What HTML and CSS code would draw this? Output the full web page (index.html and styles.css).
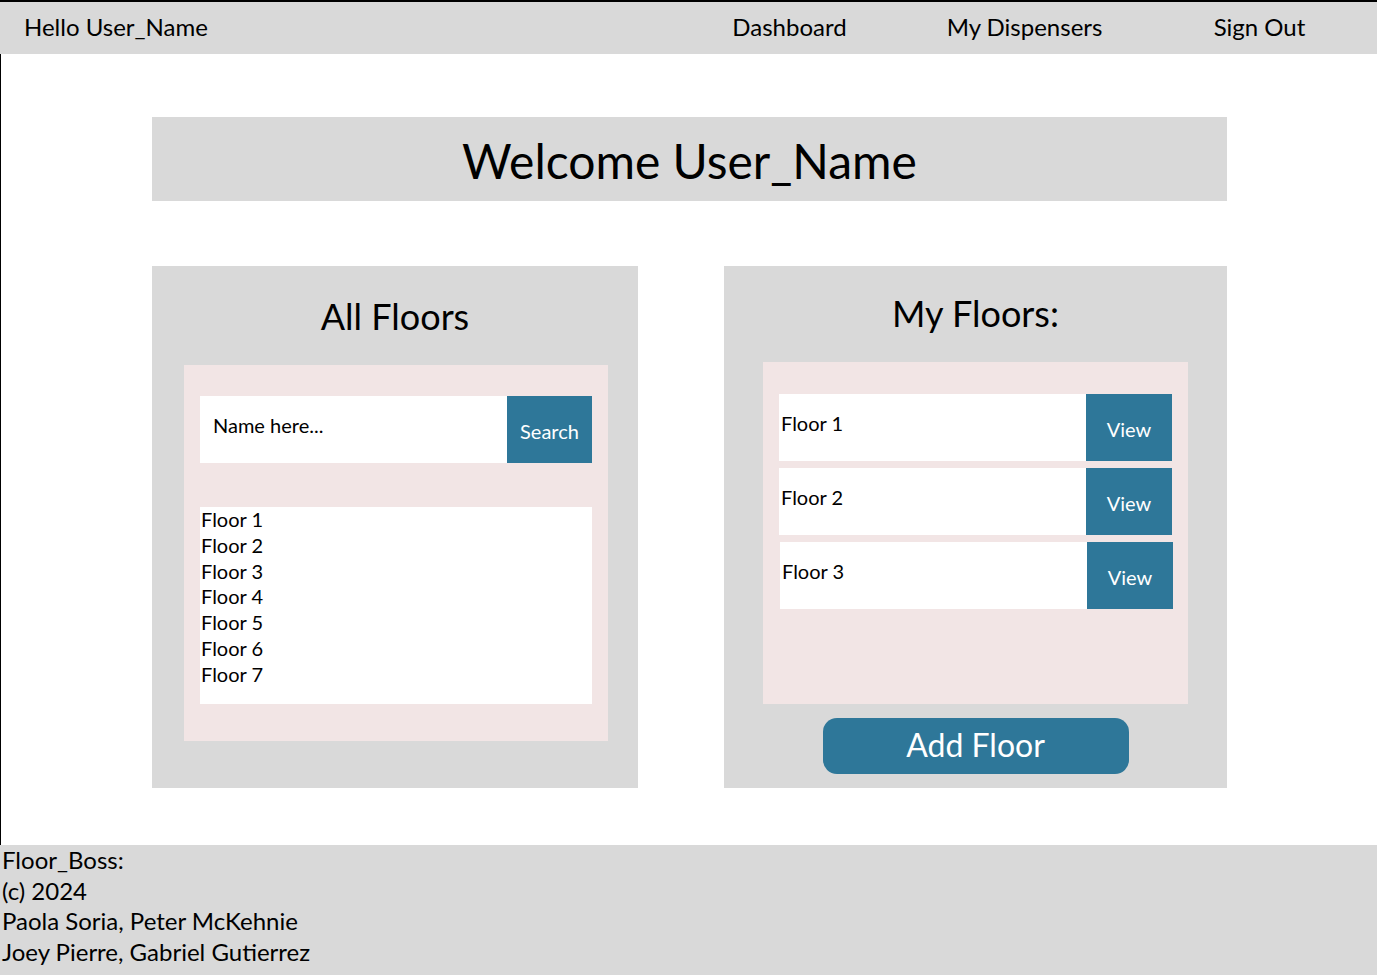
FILE: index.html
```html
<!DOCTYPE html>
<html lang="en">
<head>
<meta charset="utf-8">
<title>Floor_Boss Dashboard</title>
<link rel="stylesheet" href="styles.css">
</head>
<body>
<div class="page">
  <header class="topbar">
    <div class="greeting">Hello User_Name</div>
    <nav class="nav">
      <a class="nav-item" href="#">Dashboard</a>
      <a class="nav-item" href="#">My Dispensers</a>
      <a class="nav-item" href="#">Sign Out</a>
    </nav>
  </header>
  <main class="main">
    <section class="welcome">Welcome User_Name</section>
    <div class="panels">
      <section class="panel panel-all">
        <h2 class="panel-title">All Floors</h2>
        <div class="inner inner-all">
          <div class="search">
            <div class="search-input">Name here...</div>
            <button class="btn search-btn">Search</button>
          </div>
          <ul class="floor-list">
            <li>Floor 1</li>
            <li>Floor 2</li>
            <li>Floor 3</li>
            <li>Floor 4</li>
            <li>Floor 5</li>
            <li>Floor 6</li>
            <li>Floor 7</li>
          </ul>
        </div>
      </section>
      <section class="panel panel-mine">
        <h2 class="panel-title title-mine">My Floors:</h2>
        <div class="inner inner-mine">
          <div class="row"><span class="row-name">Floor 1</span><button class="btn view-btn">View</button></div>
          <div class="row"><span class="row-name">Floor 2</span><button class="btn view-btn">View</button></div>
          <div class="row row-shift"><span class="row-name">Floor 3</span><button class="btn view-btn">View</button></div>
        </div>
        <button class="btn add-btn">Add Floor</button>
      </section>
    </div>
  </main>
  <footer class="footer">
    <div>Floor_Boss:</div>
    <div>(c) 2024</div>
    <div>Paola Soria, Peter McKehnie</div>
    <div>Joey Pierre, Gabriel Gutierrez</div>
  </footer>
</div>
</body>
</html>
```

FILE: styles.css
```css
* { box-sizing: border-box; }
html, body { margin: 0; padding: 0; background: #ffffff; }
body {
  font-family: "Lato", "Noto Sans", sans-serif;
  color: #000;
  width: 1377px;
  height: 975px;
  overflow: hidden;
}
.page {
  border-top: 2px solid #000;
  display: flex;
  flex-direction: column;
  height: 975px;
}
.topbar {
  height: 52px;
  flex: none;
  background: #d9d9d9;
  display: flex;
  align-items: center;
  justify-content: space-between;
  padding-left: 24px;
  font-size: 24px;
}
.greeting { padding-bottom: 4px; }
.nav { display: flex; }
.nav-item {
  width: 235px;
  text-align: center;
  color: #000;
  text-decoration: none;
  padding-bottom: 4px;
}
.main {
  flex: 1;
  border-left: 1px solid #000;
  padding-top: 63px;
}
.welcome {
  width: 1075px;
  height: 84px;
  margin-left: 151px;
  background: #d9d9d9;
  display: flex;
  align-items: center;
  justify-content: center;
  font-size: 48px;
  padding-top: 2px;
}
.panels {
  display: flex;
  gap: 86px;
  margin-top: 65px;
  margin-left: 151px;
}
.panel {
  background: #d9d9d9;
  height: 522px;
  display: flex;
  flex-direction: column;
}
.panel-all { width: 486px; }
.panel-mine { width: 503px; align-items: center; }
.panel-title {
  margin: 0;
  font-weight: normal;
  font-size: 36px;
  text-align: center;
  height: 99px;
  padding-top: 28px;
  line-height: 44px;
}
.title-mine { height: 96px; padding-top: 25px; width: 100%; }
.inner { background: #f2e5e5; }
.inner-all {
  margin: 0 30px 0 32px;
  height: 376px;
  padding: 31px 16px 0;
}
.search {
  display: flex;
  height: 67px;
}
.search-input {
  flex: 1;
  background: #fff;
  font-size: 20px;
  padding-left: 13px;
  display: flex;
  align-items: center;
  padding-bottom: 10px;
}
.btn {
  font-family: inherit;
  border: none;
  background: #2e7799;
  color: #fff;
  cursor: pointer;
}
.search-btn {
  width: 85px;
  font-size: 20px;
  padding: 2px 0 0;
}
.floor-list {
  list-style: none;
  margin: 44px 0 0;
  padding: 0 0 0 1px;
  background: #fff;
  height: 197px;
  font-size: 20px;
  line-height: 25.8px;
}
.inner-mine {
  width: 425px;
  height: 342px;
  padding: 32px 16px 0;
  display: flex;
  flex-direction: column;
  gap: 7px;
}
.row {
  height: 67px;
  background: #fff;
  display: flex;
  align-items: center;
  justify-content: space-between;
}
.row-shift { margin: 0 -1px 0 1px; }
.row-name {
  font-size: 20px;
  padding-left: 2px;
  padding-bottom: 10px;
}
.view-btn {
  width: 86px;
  height: 67px;
  font-size: 20px;
  padding: 2px 0 0;
}
.add-btn {
  margin-top: 14px;
  width: 306px;
  height: 56px;
  border-radius: 14px;
  font-size: 32px;
  padding: 0 0 4px;
}
.footer {
  flex: none;
  height: 130px;
  background: #d9d9d9;
  padding: 0 0 0 2px;
  font-size: 24px;
  line-height: 30.5px;
}
```
